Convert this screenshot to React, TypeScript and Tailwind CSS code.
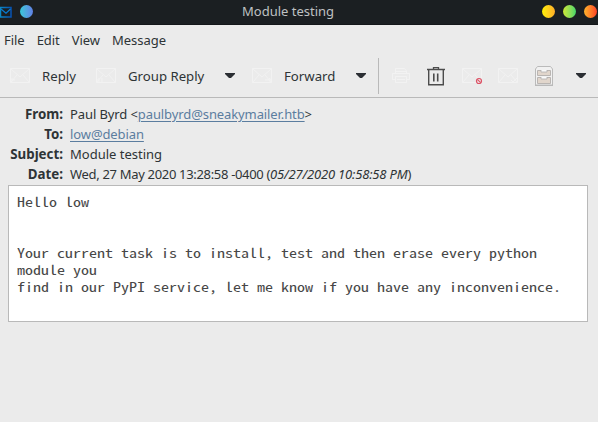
import type { ReactNode } from "react";

function Envelope({ children }: { children?: ReactNode }) {
  return (
    <svg width="22" height="18" viewBox="0 0 22 18" fill="none" stroke="#f2f2f2" className="shrink-0">
      <path d="M1.5 1.5h19v14h-19zM2 2l9 8 9-8M2 15l6-7M20 15l-6-7" />
      {children}
    </svg>
  );
}

function Caret() {
  return (
    <svg width="10" height="6" viewBox="0 0 10 6" className="shrink-0">
      <path d="M0 0h10v1L6 5H4L0 1z" fill="#2b2e33" />
    </svg>
  );
}

function MailLogo() {
  return (
    <svg width="12" height="12" viewBox="0 0 12 12" fill="none" className="shrink-0">
      <defs>
        <linearGradient id="mail" x1="0" x2="1">
          <stop offset="0" stopColor="#0b87c4" />
          <stop offset="1" stopColor="#0752b4" />
        </linearGradient>
      </defs>
      <path d="M.5 1.500H11V11H.5z" stroke="url(#mail)" strokeWidth="1.500" />
      <path d="M1 3l5 4.200L10.500 3" stroke="#087bd0" strokeWidth="1.300" />
    </svg>
  );
}

function Printer() {
  return (
    <svg width="20" height="18" viewBox="0 0 20 18" fill="none" stroke="#f2f2f2" className="shrink-0">
      <path d="M4.500 6V1.500h9L15.500 4v2M4 12.500H1.500V6.500h17v6H16M4.500 9.500h11v6h-11zM4 4.500h11M6 12.500h8" />
    </svg>
  );
}

function Trash() {
  return (
    <svg width="18" height="19" viewBox="0 0 18 19" fill="none" stroke="#4c4c4c" className="shrink-0">
      <path d="M0 2.500h18" strokeWidth="1.500" />
      <path d="M6.500 2v-1.300h5V2" strokeWidth="1.300" />
      <path d="M1.700 3v14.700h14.600V3" strokeWidth="1.400" />
      <path d="M6.800 6.500v8M10.700 6.500v8" strokeWidth="1.600" />
    </svg>
  );
}

function Cabinet() {
  return (
    <svg width="20" height="22" viewBox="0 0 20 22" fill="none" className="shrink-0">
      <path d="M1.500 20V4l2-2.500h13l2 2.500v16z" fill="#f1f1f1" stroke="#bababa" />
      <path d="M1 20.500h18" stroke="#b9b9b9" />
      <path d="M3.500 5.500h13v5h-13zM3.500 12.500h13v6h-13z" fill="#e1d6cc" stroke="#b9b5b2" />
      <path d="M7 5h6v2H7zM7 12h6v2H7z" fill="#fafafa" />
      <path d="M7 5v2h6V5M7 12v2h6v-2" stroke="#b0afae" strokeWidth=".8" />
    </svg>
  );
}

function HeaderRow({ label, children }: { label: string; children: ReactNode }) {
  return (
    <div className="flex h-5 items-center">
      <span className="w-[63px] shrink-0 text-right text-[13.33px] font-bold">{label}</span>
      <span className="ml-[7px]">{children}</span>
    </div>
  );
}

export default function App() {
  return (
    <div className="flex h-[422px] w-[598px] flex-col overflow-hidden bg-[#ebebeb] font-['Noto_Sans',sans-serif] text-[13px] leading-5 whitespace-nowrap text-[#2e3436]">
      <header className="flex h-[25px] shrink-0 items-center border-b border-[#14171a] bg-[#1b1f22] text-[#bfc1c2]">
        <div className="flex w-[242px] items-center gap-2">
          <MailLogo />
          <span className="mb-px size-[13px] rounded-full bg-linear-to-r from-[#35c8d8] to-[#607fe5]" />
        </div>
        <h1 className="grow pb-0.5">Module testing</h1>
        <div className="flex w-[56px] gap-2 pb-px">
          <span className="size-[13px] shrink-0 rounded-full bg-linear-to-r from-[#fff000] to-[#ffad27]" />
          <span className="size-[13px] shrink-0 rounded-full bg-linear-to-r from-[#cce833] to-[#3ed568]" />
          <span className="size-[13px] shrink-0 rounded-full bg-linear-to-r from-[#ffb22b] to-[#ff3b26]" />
        </div>
      </header>

      <nav className="flex h-[31px] shrink-0 items-center gap-3 pb-px pl-1 tracking-[-0.04px]">
        <span>File</span>
        <span>Edit</span>
        <span>View</span>
        <span>Message</span>
      </nav>

      <div className="flex h-[42px] shrink-0 items-center border-b border-[#b9b9b9] pb-px text-[13.2px]">
        <div className="flex w-[95px] items-center gap-[11px] pl-[9px]">
          <Envelope><path d="M1 13h5M3.500 11L1 13.500l3 2" /></Envelope>
          <span>Reply</span>
        </div>
        <div className="flex w-[130px] items-center gap-[11px]">
          <Envelope><path d="M1 13h2M4 11v4M7 11v4" /></Envelope>
          <span>Group Reply</span>
        </div>
        <Caret />
        <div className="flex w-[121px] items-center gap-[11px] pl-4">
          <Envelope><path d="M14 13h6M18 11l2.500 2-3 3" /></Envelope>
          <span>Forward</span>
        </div>
        <Caret />
        <div className="ml-3 h-9 w-px bg-[#b9b9b9]" />
        <div className="ml-3 flex w-9 items-center"><Printer /></div>
        <div className="flex w-[34px] items-center"><Trash /></div>
        <div className="flex w-9 items-center">
          <Envelope>
            <circle cx="18" cy="14" r="2.500" stroke="#dc5265" strokeWidth="1.200" />
            <path d="M16.300 12.300l3.400 3.400" stroke="#dc5265" strokeWidth="1.200" />
          </Envelope>
        </div>
        <div className="flex w-[37px] items-center"><Envelope><path d="M14 13l2 2 4-4" /></Envelope></div>
        <div className="flex w-[42px] items-center"><Cabinet /></div>
        <Caret />
      </div>

      <section className="mt-[6px] shrink-0">
        <HeaderRow label="From:">
          <span className="tracking-[-0.1px]">
            Paul Byrd &lt;<a className="text-[#5b7d9f] underline underline-offset-2">paulbyrd@sneakymailer.htb</a>&gt;
          </span>
        </HeaderRow>
        <HeaderRow label="To:"><a className="tracking-[-0.1px] text-[#5b7d9f] underline underline-offset-2">low@debian</a></HeaderRow>
        <HeaderRow label="Subject:">Module testing</HeaderRow>
        <HeaderRow label="Date:">
          <span className="tracking-[-0.32px]">
            Wed, 27 May 2020 13:28:58 -0400 (<i className="tracking-[-0.18px]">05/27/2020 10:58:58 PM</i>)
          </span>
        </HeaderRow>
      </section>

      <main className="mt-px mr-[10px] ml-2 h-[137px] shrink-0 border border-[#b9b9b9] bg-white px-2 pt-[7px]">
        <div className="w-[450px] origin-left scale-x-[1.2308] font-['Noto_Sans_Mono_CJK_SC','Liberation_Mono',monospace] text-[13px] leading-[17px] whitespace-pre text-[#484848]">
          {"Hello low\n\n\nYour current task is to install, test and then erase every python\nmodule you\nfind in our PyPI service, let me know if you have any inconvenience."}
        </div>
      </main>
    </div>
  );
}
